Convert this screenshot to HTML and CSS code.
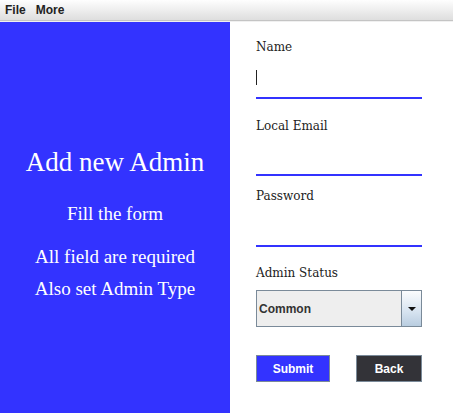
FILE: index.html
```html
<!DOCTYPE html>
<html>
<head>
<meta charset="utf-8">
<link rel="stylesheet" href="styles.css">
</head>
<body>
<div class="menubar">
  <span class="menu">File</span>
  <span class="menu">More</span>
</div>
<div class="main">
  <div class="side">
    <div class="title">Add new Admin</div>
    <div class="sub">Fill the form</div>
    <div class="note">All field are required</div>
    <div class="note note2">Also set Admin Type</div>
  </div>
  <div class="form">
    <div class="label">Name</div>
    <div class="field field-name"><span class="caret"></span></div>
    <div class="label label-email">Local Email</div>
    <div class="field field-email"></div>
    <div class="label label-pass">Password</div>
    <div class="field field-pass"></div>
    <div class="label label-status">Admin Status</div>
    <div class="combo">
      <div class="combo-value">Common</div>
      <div class="combo-btn"><span class="arrow"></span></div>
    </div>
    <div class="buttons">
      <div class="btn btn-submit">Submit</div>
      <div class="btn btn-back">Back</div>
    </div>
  </div>
</div>
</body>
</html>
```

FILE: styles.css
```css
html, body {
  margin: 0;
  padding: 0;
  background: #ffffff;
}
body {
  width: 453px;
  height: 413px;
  overflow: hidden;
}
.menubar {
  height: 20px;
  background: linear-gradient(#fefefe, #dedede);
  border-bottom: 1px solid #c4c4c4;
  box-shadow: 0 1px 0 #f0f0f0;
  display: flex;
  align-items: center;
  padding-left: 5px;
  gap: 10px;
  font-family: "Liberation Sans", Arial, sans-serif;
  font-weight: bold;
  font-size: 12px;
  color: #222222;
}
.main {
  margin-top: 1px;
  display: flex;
  height: 391px;
}
.side {
  width: 230px;
  background: #3333ff;
  color: #ffffff;
  font-family: "Liberation Serif", "Times New Roman", serif;
  text-align: center;
  padding-top: 125px;
  box-sizing: border-box;
}
.title {
  font-size: 27px;
  line-height: 30px;
}
.sub {
  font-size: 19px;
  line-height: 22px;
  margin-top: 26px;
}
.note {
  font-size: 19px;
  line-height: 22px;
  margin-top: 21px;
}
.note2 {
  margin-top: 10px;
}
.form {
  padding-left: 26px;
  padding-top: 17px;
  width: 166px;
  font-family: "DejaVu Serif", serif;
  color: #222222;
}
.label {
  font-size: 12px;
  line-height: 16px;
  height: 16px;
}
.field {
  border-bottom: 2px solid #3333ff;
  box-sizing: content-box;
}
.field-name {
  height: 42px;
  display: flex;
  align-items: flex-start;
}
.caret {
  width: 1px;
  height: 15px;
  background: #222222;
  margin-top: 15px;
}
.label-email { margin-top: 19px; }
.field-email { height: 40px; }
.label-pass { margin-top: 12px; }
.field-pass { height: 41px; }
.label-status { margin-top: 18px; }
.combo {
  margin-top: 9px;
  height: 35px;
  border: 1px solid #7a8a99;
  background: #eeeeee;
  display: flex;
}
.combo-value {
  flex: 1;
  display: flex;
  align-items: center;
  padding-left: 2px;
  font-family: "Liberation Sans", Arial, sans-serif;
  font-weight: bold;
  font-size: 12px;
  color: #333333;
}
.combo-btn {
  width: 19px;
  border-left: 1px solid #7a8a99;
  background: linear-gradient(#fbfcfd, #d6e3f0 60%, #b9cde0);
  display: flex;
  align-items: center;
  justify-content: center;
}
.arrow {
  width: 0;
  height: 0;
  border-left: 4px solid transparent;
  border-right: 4px solid transparent;
  border-top: 4px solid #111111;
}
.buttons {
  margin-top: 28px;
  display: flex;
  gap: 26px;
}
.btn {
  height: 25px;
  border: 1px solid #7a8a99;
  display: flex;
  align-items: center;
  justify-content: center;
  font-family: "Liberation Sans", Arial, sans-serif;
  font-weight: bold;
  font-size: 12px;
  color: #ffffff;
}
.btn-submit {
  width: 72px;
  background: #3333ff;
}
.btn-back {
  width: 64px;
  background: #333338;
}
```
